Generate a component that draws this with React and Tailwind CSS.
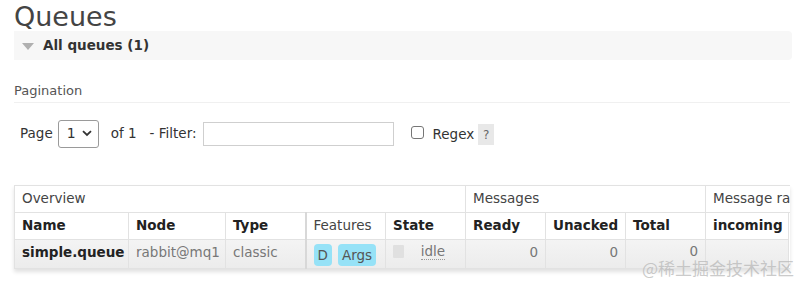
import React from "react";

const font = { fontFamily: '"DejaVu Sans", Verdana, sans-serif' };

function QueuesTable() {
  const th = "border border-[#e2e2e2] px-[7px] text-left align-middle";
  const td = "border border-[#e2e2e2] px-[7px] pb-[3px]";
  return (
    <div className="mt-[37px] w-[776px] overflow-hidden shadow-[0_3px_4px_rgba(0,0,0,0.12)]">
      <table className="border-collapse table-fixed w-[900px] text-[13.5px]">
        <colgroup>
          <col className="w-[114px]" />
          <col className="w-[97px]" />
          <col className="w-[80px]" />
          <col className="w-[80px]" />
          <col className="w-[80px]" />
          <col className="w-[80px]" />
          <col className="w-[80px]" />
          <col className="w-[80px]" />
          <col className="w-[83px]" />
          <col className="w-[126px]" />
        </colgroup>
        <thead>
          <tr className="h-[27px] bg-white text-[#444]">
            <th colSpan={5} className={`${th} font-normal`}>Overview</th>
            <th colSpan={3} className={`${th} font-normal`}>Messages</th>
            <th colSpan={2} className={`${th} font-normal whitespace-nowrap`}>Message rates</th>
          </tr>
          <tr className="h-[27px] bg-white text-[#222]">
            <th className={`${th} font-bold`}>Name</th>
            <th className={`${th} font-bold`}>Node</th>
            <th className={`${th} font-bold`}>Type</th>
            <th className={`${th} font-normal text-[#444] border-l-2 border-l-[#d8d8d8]`}>Features</th>
            <th className={`${th} font-bold`}>State</th>
            <th className={`${th} font-bold`}>Ready</th>
            <th className={`${th} font-bold`}>Unacked</th>
            <th className={`${th} font-bold`}>Total</th>
            <th className={`${th} font-bold`}>incoming</th>
            <th className="border-t border-[#e2e2e2]"></th>
          </tr>
        </thead>
        <tbody>
          <tr className="h-[29px] bg-gradient-to-b from-[#f4f4f4] to-[#ececec] text-[#777]">
            <td className={`${td} font-bold text-[#222]`}>simple.queue</td>
            <td className={`${td} whitespace-nowrap`}>rabbit@mq1</td>
            <td className={td}>classic</td>
            <td className="border border-[#e2e2e2] border-l-2 border-l-[#d8d8d8] px-[7px]">
              <div className="flex items-center gap-[6px] text-[#555]">
                <span className="bg-[#96e2f7] rounded-[4px] px-[4px] h-[22px] leading-[22px] mt-[2px]">D</span>
                <span className="bg-[#96e2f7] rounded-[4px] px-[4px] h-[22px] leading-[22px] mt-[2px]">Args</span>
              </div>
            </td>
            <td className={td}>
              <div className="flex items-center justify-between pr-[13px]">
                <span className="w-[11px] h-[13px] bg-[#e0e0e0] rounded-[1px] -mt-[2px]"></span>
                <span className="border-b border-dotted border-[#999] leading-[15px]">idle</span>
              </div>
            </td>
            <td className="border border-[#e2e2e2] px-[7px] text-right align-top pt-[2px]">0</td>
            <td className="border border-[#e2e2e2] px-[7px] text-right align-top pt-[2px]">0</td>
            <td className="border border-[#e2e2e2] px-[7px] text-right align-top pt-[1px]">0</td>
            <td className="border border-[#e2e2e2] px-[7px]"></td>
            <td className="border-b border-[#e2e2e2] bg-white"></td>
          </tr>
        </tbody>
      </table>
    </div>
  );
}

export default function App() {
  return (
    <div className="relative w-[800px] h-[283px] bg-white overflow-hidden text-[#444]" style={font}>
      <div className="pl-[14px]">
        <h1 className="text-[27px] leading-[30px] pt-[2px] font-normal text-[#444]">Queues</h1>

        <div className="mt-[-1px] w-[778px] h-[29px] bg-[#f7f7f7] rounded-r-[4px] flex items-center pl-[8px]">
          <svg width="12" height="7" viewBox="0 0 12 7" className="mt-[1px]">
            <path d="M0 0 L12 0 L6 7 Z" fill="#b0b0b0" />
          </svg>
          <span className="ml-[9px] text-[13.5px] font-bold text-[#333]">All queues (1)</span>
        </div>

        <div className="mt-[21px] w-[776px] border-b border-[#f0f0f0] pb-[1px] text-[13px] text-[#555]">
          Pagination
        </div>

        <div className="mt-[17px] flex items-center h-[28px] text-[13.5px] text-[#333] pl-[6px]">
          <span>Page</span>
          <div className="ml-[5px] w-[41px] h-[28px] border border-[#9a9a9a] rounded-[3px] flex items-center pl-[8px] gap-[6px] text-[14px]">
            <span>1</span>
            <svg width="10" height="7" viewBox="0 0 10 7">
              <path d="M1 1.2 L5 5 L9 1.2" fill="none" stroke="#333" strokeWidth="1.8" />
            </svg>
          </div>
          <span className="ml-[12px]">of 1</span>
          <span className="ml-[13px]">- Filter:</span>
          <div className="ml-[6px] w-[191px] h-[24px] border border-[#cfcfcf]"></div>
          <div className="ml-[17px] w-[13px] h-[13px] border border-[#767676] rounded-[3px] -mt-[3px]"></div>
          <span className="ml-[9px] mt-[2px]">Regex</span>
          <span className="ml-[4px] w-[16px] h-[21px] bg-[#e8e8e8] text-[#666] flex items-center justify-center text-[12px] mt-[2px]">?</span>
        </div>

        <QueuesTable />
      </div>

      <div
        className="absolute left-[642px] top-[257px] text-[17px] leading-[22px] text-[rgba(180,180,180,0.7)] whitespace-nowrap"
        style={{ fontFamily: '"Noto Sans CJK SC", sans-serif' }}
      >
        @稀土掘金技术社区
      </div>
    </div>
  );
}
